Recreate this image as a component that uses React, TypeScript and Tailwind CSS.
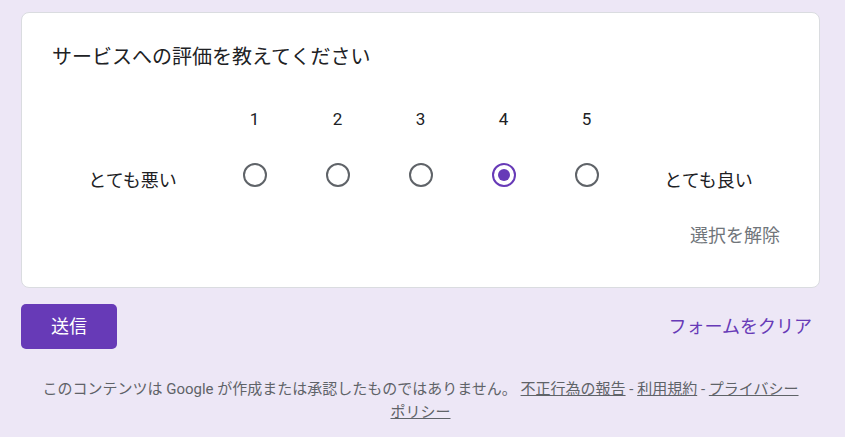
import { useState } from 'react';

const SCALE = [1, 2, 3, 4, 5];

function Radio({ checked, onClick }: { checked: boolean; onClick: () => void }) {
  return (
    <button
      type="button"
      role="radio"
      aria-checked={checked}
      onClick={onClick}
      className={
        checked
          ? 'flex size-[24px] items-center justify-center rounded-full border-[2.4px] border-[#673ab7]'
          : 'flex size-[24px] items-center justify-center rounded-full border-[2.4px] border-[#5f6368]'
      }
    >
      {checked && <span className="size-[12px] rounded-full bg-[#673ab7]" />}
    </button>
  );
}

export default function App() {
  const [value, setValue] = useState<number | null>(4);

  return (
    <div className="min-h-[437px] bg-[#ede7f6] pt-[12px] font-['Roboto','Noto_Sans_CJK_JP',sans-serif] text-[#202124]">
      <div className="ml-[21px] w-[799px]">
        {/* question card */}
        <div className="rounded-lg border border-[#dadce0] bg-white px-[30px] pb-[34px] pt-[32px]">
          <h2 className="text-[20px] leading-[24px]">サービスへの評価を教えてください</h2>

          <div className="mt-[38px] flex text-[17px] leading-[24px]">
            <div className="w-[161px]" />
            {SCALE.map((n) => (
              <div key={n} className="w-[83px] text-center">
                {n}
              </div>
            ))}
            <div className="w-[161px]" />
          </div>

          <div className="mt-[20px] flex h-[48px] items-center">
            <div className="w-[161px] pt-[11px] text-center text-[18px] leading-[24px]">とても悪い</div>
            {SCALE.map((n) => (
              <div key={n} className="flex w-[83px] justify-center">
                <Radio checked={value === n} onClick={() => setValue(n)} />
              </div>
            ))}
            <div className="w-[161px] pt-[11px] text-center text-[18px] leading-[24px]">とても良い</div>
          </div>

          <div className="mt-[18px] flex justify-end">
            <button
              type="button"
              onClick={() => setValue(null)}
              className="mr-[9px] h-[36px] text-[18px] text-[#70757a]"
            >
              選択を解除
            </button>
          </div>
        </div>

        {/* actions */}
        <div className="mt-[16px] flex items-center justify-between">
          <button
            type="submit"
            className="h-[45px] w-[96px] rounded-[5px] bg-[#673ab7] text-[18px] text-white"
          >
            送信
          </button>
          <button type="button" onClick={() => setValue(null)} className="mr-[8px] text-[18px] text-[#673ab7]">
            フォームをクリア
          </button>
        </div>

        {/* footer */}
        <p className="mt-[29px] text-center text-[15px] leading-[23px] text-[#5f6368]">
          このコンテンツは Google が作成または承認したものではありません。{' '}
          <a href="#" className="underline">
            不正行為の報告
          </a>{' '}
          -{' '}
          <a href="#" className="underline">
            利用規約
          </a>{' '}
          -{' '}
          <a href="#" className="underline">
            <span className="whitespace-nowrap">プライバシー</span>{' '}
            <span className="whitespace-nowrap">ポリシー</span>
          </a>
        </p>
      </div>
    </div>
  );
}
